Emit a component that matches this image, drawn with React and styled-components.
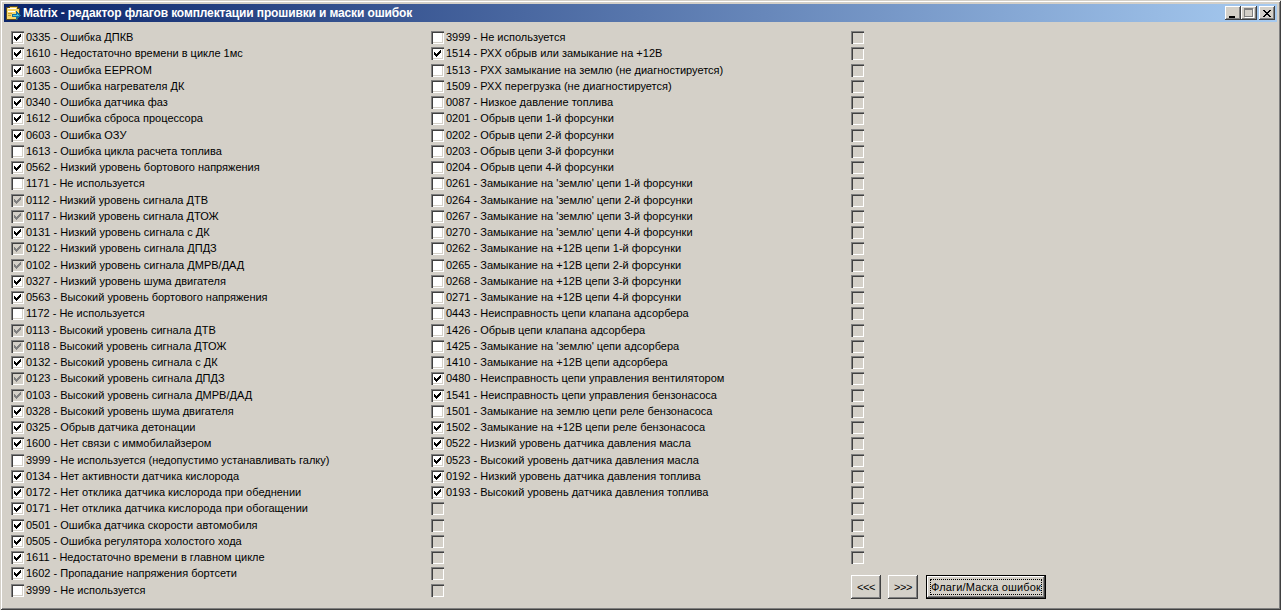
import React from 'react';
import styled, { createGlobalStyle } from 'styled-components';

const GlobalStyle = createGlobalStyle`
  html, body { margin: 0; padding: 0; background: #d4d0c8; }
  body { font-family: "Liberation Sans", Arial, sans-serif; font-size: 11px; color: #000; overflow: hidden; }
`;

const Window = styled.div`
  width: 1281px;
  height: 610px;
  box-sizing: border-box;
  background: #d4d0c8;
  padding: 4px;
  display: flex;
  flex-direction: column;
  box-shadow: inset 1px 1px 0 #d4d0c8, inset -1px -1px 0 #404040, inset 2px 2px 0 #fff, inset -2px -2px 0 #808080;
`;

const TitleBar = styled.div`
  height: 18px;
  flex: none;
  display: flex;
  align-items: center;
  padding: 0 2px;
  background: linear-gradient(90deg, #0a246a, #a6caf0);
`;

const TitleText = styled.span`
  margin-left: 1px;
  color: #fff;
  font-weight: 700;
  font-size: 12px;
  letter-spacing: -0.13px;
  white-space: nowrap;
  flex: 1;
`;

const CaptionButton = styled.button`
  width: 16px;
  height: 14px;
  padding: 0;
  margin-left: ${p => p.$gap}px;
  border: 0;
  background: #d4d0c8;
  display: flex;
  align-items: center;
  justify-content: center;
  box-shadow: inset -1px -1px 0 #404040, inset 1px 1px 0 #fff, inset -2px -2px 0 #808080;
`;

const Columns = styled.div`
  display: grid;
  grid-template-columns: repeat(3, 420px);
  padding: 7.4px 0 0 7px;
`;

const Column = styled.div`
  display: flex;
  flex-direction: column;
`;

const Row = styled.div`
  height: 16.265px;
  display: flex;
  align-items: center;
  white-space: nowrap;
`;

const Box = styled.span`
  width: 13px;
  height: 13px;
  flex: none;
  box-sizing: border-box;
  background: ${p => (p.$state === 'on' || p.$state === 'off' ? '#fff' : '#d4d0c8')};
  box-shadow: inset 1px 1px 0 #808080, inset 2px 2px 0 #404040, inset -1px -1px 0 #fff, inset -2px -2px 0 #d4d0c8;
  display: flex;
  align-items: center;
  justify-content: center;
`;

const Label = styled.span`
  margin-left: 2px;
  line-height: 13px;
`;

const Toolbar = styled.div`
  display: flex;
  align-items: center;
  margin-top: 9px;
`;

const NavButton = styled.button`
  width: ${p => p.$w}px;
  height: 24px;
  margin-right: ${p => p.$gap}px;
  padding: 0;
  border: 0;
  background: #d4d0c8;
  font: 11px "Liberation Sans", Arial, sans-serif;
  letter-spacing: -0.4px;
  color: #000;
  box-shadow: inset -1px -1px 0 #404040, inset 1px 1px 0 #fff, inset -2px -2px 0 #808080;
`;

const DefaultButton = styled.button`
  position: relative;
  width: 120px;
  height: 24px;
  padding: 0;
  border: 1px solid #000;
  background: #d4d0c8;
  font: 11px "Liberation Sans", Arial, sans-serif;
  letter-spacing: 0.15px;
  color: #000;
  white-space: nowrap;
  box-shadow: inset -1px -1px 0 #404040, inset 1px 1px 0 #fff, inset -2px -2px 0 #808080;
  &::after {
    content: '';
    position: absolute;
    inset: 3px;
    border: 1px dotted #000;
  }
`;

const col1 = [
  ['0335 - Ошибка ДПКВ', 'on'],
  ['1610 - Недостаточно времени в цикле 1мс', 'on'],
  ['1603 - Ошибка EEPROM', 'on'],
  ['0135 - Ошибка нагревателя ДК', 'on'],
  ['0340 - Ошибка датчика фаз', 'on'],
  ['1612 - Ошибка сброса процессора', 'on'],
  ['0603 - Ошибка ОЗУ', 'on'],
  ['1613 - Ошибка цикла расчета топлива', 'off'],
  ['0562 - Низкий уровень бортового напряжения', 'on'],
  ['1171 - Не используется', 'off'],
  ['0112 - Низкий уровень сигнала ДТВ', 'gray'],
  ['0117 - Низкий уровень сигнала ДТОЖ', 'gray'],
  ['0131 - Низкий уровень сигнала с ДК', 'on'],
  ['0122 - Низкий уровень сигнала ДПДЗ', 'gray'],
  ['0102 - Низкий уровень сигнала ДМРВ/ДАД', 'gray'],
  ['0327 - Низкий уровень шума двигателя', 'on'],
  ['0563 - Высокий уровень бортового напряжения', 'on'],
  ['1172 - Не используется', 'off'],
  ['0113 - Высокий уровень сигнала ДТВ', 'gray'],
  ['0118 - Высокий уровень сигнала ДТОЖ', 'gray'],
  ['0132 - Высокий уровень сигнала с ДК', 'on'],
  ['0123 - Высокий уровень сигнала ДПДЗ', 'gray'],
  ['0103 - Высокий уровень сигнала ДМРВ/ДАД', 'gray'],
  ['0328 - Высокий уровень шума двигателя', 'on'],
  ['0325 - Обрыв датчика детонации', 'on'],
  ['1600 - Нет связи с иммобилайзером', 'on'],
  ['3999 - Не используется (недопустимо устанавливать галку)', 'off'],
  ['0134 - Нет активности датчика кислорода', 'on'],
  ['0172 - Нет отклика датчика кислорода при обеднении', 'on'],
  ['0171 - Нет отклика датчика кислорода при обогащении', 'on'],
  ['0501 - Ошибка датчика скорости автомобиля', 'on'],
  ['0505 - Ошибка регулятора холостого хода', 'on'],
  ['1611 - Недостаточно времени в главном цикле', 'on'],
  ['1602 - Пропадание напряжения бортсети', 'on'],
  ['3999 - Не используется', 'off'],
];

const col2 = [
  ['3999 - Не используется', 'off'],
  ['1514 - РХХ обрыв или замыкание на +12В', 'on'],
  ['1513 - РХХ замыкание на землю (не диагностируется)', 'off'],
  ['1509 - РХХ перегрузка (не диагностируется)', 'off'],
  ['0087 - Низкое давление топлива', 'off'],
  ['0201 - Обрыв цепи 1-й форсунки', 'off'],
  ['0202 - Обрыв цепи 2-й форсунки', 'off'],
  ['0203 - Обрыв цепи 3-й форсунки', 'off'],
  ['0204 - Обрыв цепи 4-й форсунки', 'off'],
  ["0261 - Замыкание на 'землю' цепи 1-й форсунки", 'off'],
  ["0264 - Замыкание на 'землю' цепи 2-й форсунки", 'off'],
  ["0267 - Замыкание на 'землю' цепи 3-й форсунки", 'off'],
  ["0270 - Замыкание на 'землю' цепи 4-й форсунки", 'off'],
  ['0262 - Замыкание на +12В цепи 1-й форсунки', 'off'],
  ['0265 - Замыкание на +12В цепи 2-й форсунки', 'off'],
  ['0268 - Замыкание на +12В цепи 3-й форсунки', 'off'],
  ['0271 - Замыкание на +12В цепи 4-й форсунки', 'off'],
  ['0443 - Неисправность цепи клапана адсорбера', 'off'],
  ['1426 - Обрыв цепи клапана адсорбера', 'off'],
  ["1425 - Замыкание на 'землю' цепи адсорбера", 'off'],
  ['1410 - Замыкание на +12В цепи адсорбера', 'off'],
  ['0480 - Неисправность цепи управления вентилятором', 'on'],
  ['1541 - Неисправность цепи управления бензонасоса', 'on'],
  ['1501 - Замыкание на землю цепи реле бензонасоса', 'off'],
  ['1502 - Замыкание на +12В цепи реле бензонасоса', 'on'],
  ['0522 - Низкий уровень датчика давления масла', 'on'],
  ['0523 - Высокий уровень датчика давления масла', 'on'],
  ['0192 - Низкий уровень датчика давления топлива', 'on'],
  ['0193 - Высокий уровень датчика давления топлива', 'on'],
  ...Array(6).fill(['', 'blank']),
];

const col3 = Array(33).fill(['', 'blank']);

const Flag = ({ text, state }) => (
  <Row>
    <Box $state={state}>
      {(state === 'on' || state === 'gray') && (
        <svg width="7" height="7" viewBox="0 0 7 7" shapeRendering="crispEdges">
          <path fill={state === 'gray' ? '#808080' : '#000'} d="M6 0h1v1H6zM5 1h2v1H5zM0 2h1v1H0zM4 2h3v1H4zM0 3h2v1H0zM3 3h3v1H3zM0 4h5v1H0zM1 5h3v1H1zM2 6h1v1H2z" />
        </svg>
      )}
    </Box>
    {text && <Label>{text}</Label>}
  </Row>
);

const AppIcon = () => (
  <svg width="16" height="16" viewBox="0 0 16 16" shapeRendering="crispEdges">
    <path fill="#f8d868" stroke="#5a4a20" d="M0.500 2.500h3v-1h8v2h2v7h-2v4H0.500z" />
    <path fill="#fff" d="M2 3h8v1H2zM2 6h7v1H2z" />
    <path fill="#c8a038" d="M2 8h4v1H2zM2 10h3v1H2z" />
    <path fill="#18709c" d="M6 9h4V6h1l4 4.500-4 4.500h-1v-3H6z" />
    <path fill="#48c8e0" d="M7 10h4V8l2 2.500H7z" />
  </svg>
);

const App = () => (
  <Window>
    <GlobalStyle />
    <TitleBar>
      <AppIcon />
      <TitleText>Matrix - редактор флагов комплектации прошивки и маски ошибок</TitleText>
      <CaptionButton>
        <svg width="8" height="9" viewBox="0 0 8 9" shapeRendering="crispEdges"><path d="M0 7h6v2H0z" /></svg>
      </CaptionButton>
      <CaptionButton>
        <svg width="10" height="10" viewBox="0 0 10 10" shapeRendering="crispEdges">
          <path fill="#fff" d="M9 1h1v9H1V9h8z" />
          <path fill="#808080" fillRule="evenodd" d="M0 0h9v9H0zM1 2v6h7V2z" />
        </svg>
      </CaptionButton>
      <CaptionButton $gap={2}>
        <svg width="8" height="7" viewBox="0 0 8 7" shapeRendering="crispEdges"><path d="M0 0h2v1h1v1h2V1h1V0h2v1H7v1H6v1H5v1h1v1h1v1h1v1H6V6H5V5H3v1H2v1H0V6h1V5h1V4h1V3H2V2H1V1H0z" /></svg>
      </CaptionButton>
    </TitleBar>
    <Columns>
      <Column>{col1.map(([t, s], i) => <Flag key={i} text={t} state={s} />)}</Column>
      <Column>{col2.map(([t, s], i) => <Flag key={i} text={t} state={s} />)}</Column>
      <Column>
        {col3.map(([t, s], i) => <Flag key={i} text={t} state={s} />)}
        <Toolbar>
          <NavButton $w={30} $gap={7}>&lt;&lt;&lt;</NavButton>
          <NavButton $w={30} $gap={8}>&gt;&gt;&gt;</NavButton>
          <DefaultButton>Флаги/Маска ошибок</DefaultButton>
        </Toolbar>
      </Column>
    </Columns>
  </Window>
);

export default App;
